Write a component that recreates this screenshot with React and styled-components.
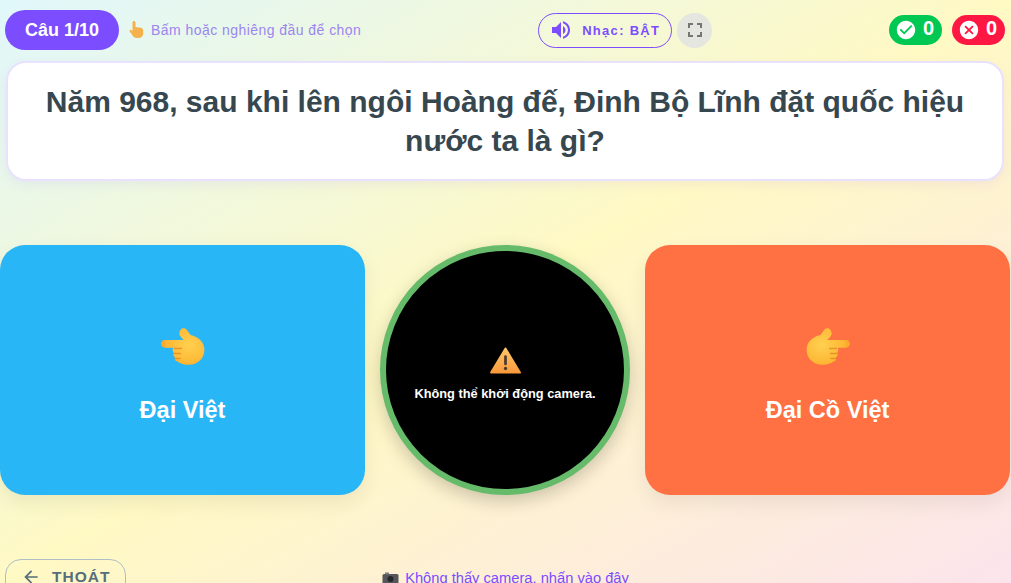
import React from "react";
import styled, { createGlobalStyle } from "styled-components";
import { MdVolumeUp, MdFullscreen, MdCheckCircle, MdCancel, MdArrowBack } from "react-icons/md";

const Global = createGlobalStyle`
html, body {
  margin: 0;
  height: 100%;
  overflow: hidden;
}
body {
  font-family: "Liberation Sans", Arial, sans-serif;
}
`;

const Page = styled.div`
  height: 100vh;
  overflow: hidden;
  background: linear-gradient(to bottom right, #e0f7fa 0%, #fff9c4 50%, #fce4ec 100%);
  display: flex;
  flex-direction: column;
  > * { flex-shrink: 0; }
`;

const TopBar = styled.header`
  display: flex;
  justify-content: space-between;
  align-items: center;
  height: 40px;
  padding: 10px 6px 0 5px;
`;

const Group = styled.div`
  display: flex;
  align-items: center;
  gap: ${(p) => p.$gap || 5}px;
`;

const CountPill = styled.div`
  width: 114px;
  height: 40px;
  border-radius: 20px;
  background: #7c4dff;
  color: #fff;
  font-size: 18px;
  font-weight: 700;
  display: flex;
  align-items: center;
  justify-content: center;
`;

const Hint = styled.div`
  margin-left: 5px;
  display: flex;
  align-items: center;
  gap: 7px;
  font-size: 14px;
  letter-spacing: 0.45px;
  color: #9c86ee;
  padding-bottom: 1px;
`;

const MusicButton = styled.button`
  width: 134px;
  height: 35px;
  box-sizing: border-box;
  border: 1px solid #7c4dff;
  border-radius: 18px;
  background: transparent;
  color: #7c4dff;
  font-family: inherit;
  font-size: 13px;
  font-weight: 700;
  letter-spacing: 1.3px;
  display: flex;
  align-items: center;
  padding: 0 0 0 10px;
  gap: 9px;
  svg { font-size: 24px; }
`;

const RoundButton = styled.button`
  width: 35px;
  height: 35px;
  border: 0;
  padding: 0;
  border-radius: 50%;
  background: #e6e6e0;
  color: #757575;
  display: flex;
  align-items: center;
  justify-content: center;
  svg { font-size: 24px; }
`;

const Score = styled.div`
  width: 53px;
  height: 30px;
  border-radius: 15px;
  background: ${(p) => p.$bg};
  color: #fff;
  font-size: 20px;
  font-weight: 700;
  display: flex;
  align-items: center;
  gap: 6px;
  padding: 0 0 4px 6px;
  box-sizing: border-box;
  svg { font-size: 22px; margin-top: 4px; }
`;

const QuestionCard = styled.section`
  margin: 11px 7px 0 6px;
  height: 120px;
  box-sizing: border-box;
  padding: 0 30px;
  border: 2px solid #e8e2ff;
  border-radius: 20px;
  background: #fff;
  box-shadow: 0 4px 12px rgba(124, 77, 255, 0.08);
  color: #37474f;
  font-size: 30px;
  font-weight: 700;
  line-height: 39px;
  text-align: center;
  display: flex;
  align-items: center;
  justify-content: center;
`;

const Answers = styled.main`
  margin-top: 64px;
  display: flex;
  gap: 15px;
  height: 250px;
`;

const AnswerCard = styled.div`
  width: 365px;
  border-radius: 25px;
  background: ${(p) => p.$bg};
  color: #fff;
  font-size: 23.5px;
  font-weight: 700;
  box-shadow: 0 8px 20px rgba(0, 0, 0, 0.07);
  display: flex;
  flex-direction: column;
  align-items: center;
  justify-content: center;
  gap: 29px;
  padding-top: 11px;
  box-sizing: border-box;
`;

const CameraCircle = styled.div`
  width: 250px;
  height: 250px;
  box-sizing: border-box;
  border: 6px solid #66bb6a;
  border-radius: 50%;
  background: #000;
  color: #fff;
  box-shadow: 0 6px 18px rgba(0, 0, 0, 0.2);
  display: flex;
  flex-direction: column;
  align-items: center;
  justify-content: center;
  gap: 12px;
  font-size: 12.8px;
  font-weight: 700;
  padding-top: 8px;
`;

const Footer = styled.footer`
  margin-top: 64px;
  padding-left: 5px;
  display: grid;
  grid-template-columns: 1fr auto 1fr;
  align-items: start;
`;

const ExitButton = styled.button`
  justify-self: start;
  width: 121px;
  height: 40px;
  box-sizing: border-box;
  border: 1px solid #b0bec5;
  border-radius: 16px;
  background: transparent;
  color: #546e7a;
  font-family: inherit;
  font-size: 15.5px;
  font-weight: 700;
  letter-spacing: 1px;
  display: flex;
  align-items: center;
  padding: 0 0 4px 15px;
  gap: 11px;
  svg { font-size: 20px; }
`;

const CameraLink = styled.a`
  display: flex;
  align-items: center;
  gap: 6px;
  margin-top: 11px;
  margin-right: 5px;
  font-size: 14.7px;
  color: #7c4dff;
`;

const PointingHand = ({ flip }) => (
  <svg width="44" height="40" viewBox="0 0 44 40" style={flip ? { transform: "scaleX(-1)" } : undefined}>
    <defs>
      <radialGradient id={flip ? "handR" : "handL"} cx="0.65" cy="0.45" r="0.7">
        <stop offset="0" stopColor="#ffd04f" />
        <stop offset="0.7" stopColor="#fdb936" />
        <stop offset="1" stopColor="#f99d22" />
      </radialGradient>
    </defs>
    <path
      d="M21 .6c1.900-1 3.700-.3 4.800 1.200l3.700 5.200C37.500 8.800 43.400 14.300 43.400 21.800c0 8.900-7 15-15.200 15-5 0-9-1-11.800-3.400-2.200-.4-3.200-2.600-2.400-4.200-1.600-1-2-3-1.100-4.500-1.400-1.100-1.500-3-.7-4.300-.2-.2-.3-.4-.4-.7H4C1.600 19.500 0 17.800 0 15.800c0-2.100 1.700-3.800 4-3.800h18.800c-1.800-1.700-3.300-3.200-4.200-5-.8-2.200.4-5.200 2.400-6.400z"
      fill={`url(#${flip ? "handR" : "handL"})`}
    />
    <path d="M13.500 20.500h7M13.500 25.500h6M14 30.500h5" stroke="#d9761c" strokeWidth="1.300" strokeLinecap="round" opacity="0.6" fill="none" />
  </svg>
);

const PointingUp = () => (
  <svg width="15" height="17" viewBox="0 0 15 17">
    <path
      d="M3.500 1.600C3.500.600 4.200 0 5 0s1.500.600 1.500 1.600V6l5 .800c1.600.300 2.700 1.400 2.700 3.200v2.500c0 2.600-2 4.500-4.600 4.500H7.800c-2 0-3.300-.900-4.200-2.400L.600 10.300c-.500-.900.600-2 1.600-1.300l1.300 1.100z"
      fill="#f5b14c"
    />
  </svg>
);

const WarningSign = () => (
  <svg width="31" height="27" viewBox="0 0 32 28">
    <defs>
      <linearGradient id="warn" x1="0" y1="0" x2="0" y2="1">
        <stop offset="0" stopColor="#ffc766" />
        <stop offset="1" stopColor="#f79a3e" />
      </linearGradient>
    </defs>
    <path d="M16 1.500 31 26.500H1z" fill="url(#warn)" stroke="url(#warn)" strokeWidth="2" strokeLinejoin="round" />
    <rect x="14.600" y="8.500" width="2.800" height="10.500" rx="1.400" fill="#4a3a30" />
    <circle cx="16" cy="22.300" r="1.700" fill="#4a3a30" />
  </svg>
);

const CameraIcon = () => (
  <svg width="17" height="14" viewBox="0 0 17 14">
    <rect x="0.500" y="3" width="16" height="10.500" rx="1.500" fill="#55565c" />
    <rect x="3" y="1.500" width="4" height="2" fill="#7a7b80" />
    <circle cx="8.500" cy="8" r="3" fill="#26272b" />
  </svg>
);

export default function App() {
  return (
    <Page>
      <Global />
      <TopBar>
        <Group $gap={5}>
          <CountPill>Câu 1/10</CountPill>
          <Hint>
            <PointingUp />
            Bấm hoặc nghiêng đầu để chọn
          </Hint>
        </Group>
        <Group $gap={5}>
          <MusicButton>
            <MdVolumeUp />
            Nhạc: BẬT
          </MusicButton>
          <RoundButton>
            <MdFullscreen />
          </RoundButton>
        </Group>
        <Group $gap={10}>
          <Score $bg="#00c853">
            <MdCheckCircle />0
          </Score>
          <Score $bg="#ff1744">
            <MdCancel />0
          </Score>
        </Group>
      </TopBar>

      <QuestionCard>
        Năm 968, sau khi lên ngôi Hoàng đế, Đinh Bộ Lĩnh đặt quốc hiệu
        <br />
        nước ta là gì?
      </QuestionCard>

      <Answers>
        <AnswerCard $bg="#29b6f6">
          <PointingHand />
          Đại Việt
        </AnswerCard>
        <CameraCircle>
          <WarningSign />
          Không thể khởi động camera.
        </CameraCircle>
        <AnswerCard $bg="#ff7043">
          <PointingHand flip />
          Đại Cồ Việt
        </AnswerCard>
      </Answers>

      <Footer>
        <ExitButton>
          <MdArrowBack />
          THOÁT
        </ExitButton>
        <CameraLink>
          <CameraIcon />
          Không thấy camera, nhấn vào đây
        </CameraLink>
      </Footer>
    </Page>
  );
}
